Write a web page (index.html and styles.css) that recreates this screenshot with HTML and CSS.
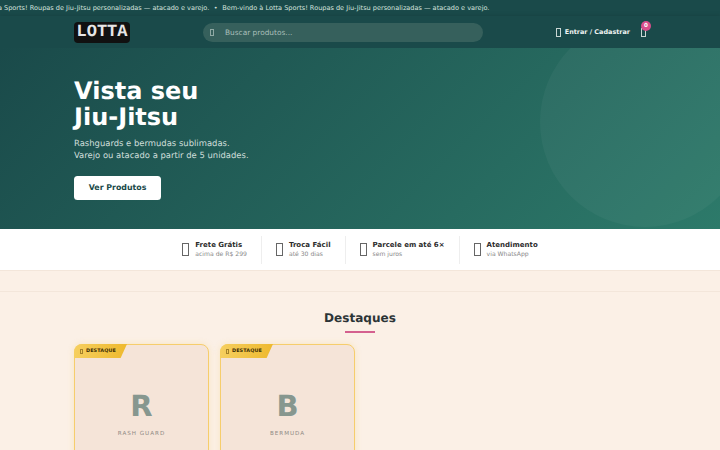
FILE: index.html
```html
<!DOCTYPE html>
<html lang="pt-BR">
<head>
  <meta charset="UTF-8" />
  <meta name="viewport" content="width=device-width, initial-scale=1.0" />
  <title>Lotta Sports</title>
  <link rel="stylesheet" href="styles.css">
</head>
<body>
  <div class="topbar">
    <div class="topbar-track">
      <span>Bem-vindo à Lotta Sports! Roupas de Jiu-Jitsu personalizadas — atacado e varejo.</span>
      <span>•</span>
      <span>Bem-vindo à Lotta Sports! Roupas de Jiu-Jitsu personalizadas — atacado e varejo.</span>
    </div>
  </div>

  <header class="header">
    <div class="logo">LOTTA</div>
    <div class="search">
      <span class="icon search-icon"></span>
      <span class="search-text">Buscar produtos...</span>
    </div>
    <div class="header-actions">
      <a class="login"><span class="icon login-icon"></span>Entrar / Cadastrar</a>
      <a class="cart"><span class="icon cart-icon"></span><span class="cart-badge">0</span></a>
    </div>
  </header>

  <section class="hero">
    <div class="hero-circle"></div>
    <h1>Vista seu<br>Jiu-Jitsu</h1>
    <p>Rashguards e bermudas sublimadas.<br>Varejo ou atacado a partir de 5 unidades.</p>
    <a class="hero-btn">Ver Produtos</a>
  </section>

  <div class="benefits">
    <div class="benefit">
      <span class="icon benefit-icon"></span>
      <div><strong>Frete Grátis</strong><small>acima de R$ 299</small></div>
    </div>
    <div class="benefit">
      <span class="icon benefit-icon"></span>
      <div><strong>Troca Fácil</strong><small>até 30 dias</small></div>
    </div>
    <div class="benefit">
      <span class="icon benefit-icon"></span>
      <div><strong>Parcele em até 6×</strong><small>sem juros</small></div>
    </div>
    <div class="benefit">
      <span class="icon benefit-icon"></span>
      <div><strong>Atendimento</strong><small>via WhatsApp</small></div>
    </div>
  </div>

  <main class="main">
    <section class="highlights">
      <h2>Destaques</h2>
      <div class="title-line"></div>
      <div class="cards">
        <div class="card">
          <span class="badge"><span class="icon badge-icon"></span>DESTAQUE</span>
          <div class="card-letter">R</div>
          <div class="card-name">RASH GUARD</div>
        </div>
        <div class="card">
          <span class="badge"><span class="icon badge-icon"></span>DESTAQUE</span>
          <div class="card-letter">B</div>
          <div class="card-name">BERMUDA</div>
        </div>
      </div>
    </section>
  </main>
</body>
</html>
```

FILE: styles.css
```css
* {
  box-sizing: border-box;
}
html, body {
  height: 450px;
  overflow: hidden;
}
body {
  font-family: "DejaVu Sans", sans-serif;
  text-rendering: geometricPrecision;
  background: #fbf0e6;
  margin: 0;
  color: #2c2c2c;
}
/* icons are plain outlined boxes */
.icon {
  display: block;
  flex: none;
  border: 1px solid currentColor;
}

/* top bar */
.topbar {
  height: 16px;
  background: #1a4a4a;
  color: #d4e2de;
  font-size: 6.55px;
  line-height: 16px;
  overflow: hidden;
  white-space: nowrap;
}
.topbar-track {
  display: flex;
  gap: 4.5px;
  margin-left: -58px;
}

/* header */
.header {
  height: 32px;
  background: #1a4a4a;
  display: flex;
  align-items: center;
  padding: 0 74px;
  box-shadow: 0 1px 6px rgba(0,0,0,0.2);
  position: relative;
}
.logo {
  width: 56px;
  height: 21px;
  background: #111;
  border-radius: 4px;
  color: #e6e6e6;
  font-family: "Liberation Mono", monospace;
  font-weight: bold;
  font-size: 17px;
  line-height: 21px;
  text-align: center;
}
.search {
  width: 280px;
  height: 19px;
  margin-left: 73px;
  background: #36605c;
  border-radius: 10px;
  display: flex;
  align-items: center;
  padding-left: 7px;
  color: #a9bfba;
  font-size: 7.4px;
}
.search-icon {
  width: 4px;
  height: 7px;
  margin-right: 11px;
  color: #8fa9a4;
}
.header-actions {
  margin-left: auto;
  display: flex;
  align-items: center;
  gap: 11px;
  color: #f0f4f2;
  font-size: 6.45px;
  font-weight: bold;
}
.login {
  display: flex;
  align-items: center;
  gap: 4px;
}
.login-icon,
.cart-icon {
  width: 5px;
  height: 9px;
  color: #c9d6d3;
}
.cart {
  position: relative;
}
.cart-badge {
  position: absolute;
  top: -7px;
  left: 0;
  width: 10px;
  height: 10px;
  border-radius: 50%;
  background: #d94f8c;
  color: white;
  font-size: 5.6px;
  line-height: 10px;
  text-align: center;
}

/* hero */
.hero {
  height: 181px;
  position: relative;
  overflow: hidden;
  padding: 30px 74px 0;
  background: linear-gradient(135deg, #1a4a4a 0%, #2d7a6a 100%);
  color: white;
}
.hero-circle {
  position: absolute;
  right: -30px;
  top: -31px;
  width: 210px;
  height: 210px;
  border-radius: 50%;
  background: rgba(255,255,255,0.04);
}
.hero h1 {
  margin: 0;
  font-size: 24px;
  line-height: 1.1;
  position: relative;
}
.hero p {
  margin: 6px 0 0;
  font-size: 8.44px;
  line-height: 1.5;
  color: #d0dfdb;
  position: relative;
}
.hero-btn {
  display: block;
  width: 87px;
  height: 23.5px;
  margin-top: 14px;
  background: white;
  border-radius: 3.5px;
  color: #1a4a4a;
  font-size: 7.875px;
  font-weight: bold;
  line-height: 23.5px;
  text-align: center;
  position: relative;
}

/* benefits strip */
.benefits {
  height: 42px;
  background: white;
  border-bottom: 1px solid #f3e6da;
  display: flex;
  justify-content: center;
  align-items: center;
}
.benefit {
  display: flex;
  align-items: center;
  gap: 6px;
  height: 28px;
  padding: 0 14px;
  border-left: 1px solid #eeeeee;
}
.benefit:first-child {
  border-left: none;
}
.benefit strong {
  display: block;
  font-size: 7px;
  line-height: 9px;
  color: #2c2c2c;
}
.benefit small {
  display: block;
  font-size: 6.1px;
  line-height: 9px;
  color: #888;
}
.benefit-icon {
  width: 7px;
  height: 13px;
  color: #666;
}

/* highlights */
.main {
  padding-top: 20px;
}
.highlights {
  border-top: 1px solid #f3e6da;
  padding: 17px 74px 0;
}
.highlights h2 {
  margin: 0;
  font-size: 12.06px;
  line-height: 18px;
  text-align: center;
  color: #2c3436;
}
.title-line {
  width: 30px;
  height: 2px;
  margin: 4px auto 0;
  background: #d4608f;
}
.cards {
  display: flex;
  gap: 11px;
  margin-top: 11px;
}
.card {
  width: 135px;
  height: 160px;
  position: relative;
  background: #f5e4d8;
  border: 1px solid #f6cd6c;
  border-radius: 8px;
  box-shadow: 0 0 6px rgba(245,200,80,0.25);
  padding-top: 43px;
  text-align: center;
}
.badge {
  position: absolute;
  top: -1px;
  left: -1px;
  width: 53px;
  height: 14px;
  padding-left: 6px;
  display: flex;
  align-items: center;
  gap: 3px;
  border-top-left-radius: 8px;
  background: linear-gradient(90deg, #f6cf5f, #eeb92e);
  clip-path: polygon(0 0, 100% 0, 88% 100%, 0 100%);
  color: #3a2c05;
  font-size: 4.9px;
  font-weight: bold;
  letter-spacing: 0.1px;
}
.badge-icon {
  width: 3px;
  height: 5px;
  color: #a5822a;
}
.card-letter {
  font-size: 29px;
  font-weight: bold;
  line-height: 36px;
  color: #87978f;
}
.card-name {
  margin-top: 7px;
  font-size: 5.6px;
  letter-spacing: 1px;
  color: #8f8a84;
}
```
